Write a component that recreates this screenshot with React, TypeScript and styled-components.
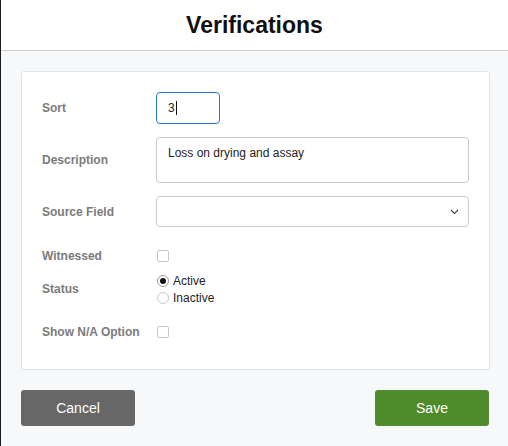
import React from "react";
import styled, { createGlobalStyle } from "styled-components";

const GlobalStyle = createGlobalStyle`
  * {
    box-sizing: border-box;
  }
  body {
    margin: 0;
    font-family: "Liberation Sans", Arial, sans-serif;
    background: #ffffff;
  }
`;

const Page = styled.div`
  display: flex;
  flex-direction: column;
  height: 446px;
  border-left: 1px solid #1c1c1c;
  background: #f7f8fa;
`;

const Header = styled.header`
  display: flex;
  align-items: center;
  justify-content: center;
  height: 51px;
  background: #ffffff;
  border-bottom: 1px solid #cfcfcf;
`;

const Title = styled.h1`
  margin: 0;
  font-size: 23px;
  font-weight: 700;
  color: #111111;
`;

const Body = styled.div`
  display: flex;
  flex-direction: column;
  padding: 20px 18px 0 20px;
`;

const Card = styled.div`
  display: flex;
  flex-direction: column;
  padding: 20px 20px 30px 20px;
  background: #ffffff;
  border: 1px solid #e2e3e5;
  border-radius: 3px;
`;

const Row = styled.div<{ $top?: number }>`
  display: grid;
  grid-template-columns: 114px 1fr;
  align-items: center;
  margin-top: ${({ $top }) => $top ?? 0}px;
`;

const Label = styled.label`
  font-size: 12px;
  font-weight: 700;
  color: #7b7b7b;
`;

const Field = styled.div<{ $focused?: boolean; $width?: number; $height: number }>`
  display: flex;
  align-items: center;
  width: ${({ $width }) => ($width ? `${$width}px` : "100%")};
  height: ${({ $height }) => $height}px;
  padding: 0 11px;
  font-size: 12px;
  color: #1e1e1e;
  background: #ffffff;
  border: 1px solid ${({ $focused }) => ($focused ? "#2a72d4" : "#cdcdcd")};
  border-radius: 4px;
`;

const TextArea = styled(Field)`
  align-items: flex-start;
  padding-top: 8px;
`;

const SelectBox = styled(Field)`
  justify-content: flex-end;
  padding: 0 9px;
`;

const Caret = styled.span`
  display: inline-block;
  width: 1px;
  height: 14px;
  margin-left: 1px;
  background: #111111;
`;

const Check = styled.span`
  display: block;
  width: 12px;
  height: 12px;
  margin-left: 1px;
  border: 1px solid #c9c9c9;
  border-radius: 2px;
  background: #ffffff;
`;

const RadioGroup = styled.div`
  display: flex;
  flex-direction: column;
`;

const RadioOption = styled.div`
  display: flex;
  align-items: center;
  gap: 4px;
  height: 17px;
  font-size: 12px;
  color: #1e1e1e;
`;

const RadioDot = styled.span<{ $checked?: boolean }>`
  display: flex;
  align-items: center;
  justify-content: center;
  width: 12px;
  height: 12px;
  margin-left: 1px;
  border-radius: 50%;
  border: 1px solid ${({ $checked }) => ($checked ? "#9a9a9a" : "#c9c9c9")};
  background: #ffffff;

  &::after {
    content: "";
    display: ${({ $checked }) => ($checked ? "block" : "none")};
    width: 6px;
    height: 6px;
    border-radius: 50%;
    background: #111111;
  }
`;

const Actions = styled.div`
  display: flex;
  justify-content: space-between;
  margin-top: 20px;
  padding-right: 1px;
`;

const Button = styled.button<{ $variant: "cancel" | "save" }>`
  width: 114px;
  height: 36px;
  font-family: inherit;
  font-size: 14px;
  color: #ffffff;
  border: none;
  border-radius: 3px;
  background: ${({ $variant }) => ($variant === "save" ? "#4f8a2b" : "#676767")};
  cursor: pointer;
`;

const Chevron = () => (
  <svg width="9" height="6" viewBox="0 0 9 6" fill="none">
    <path d="M1 1l3.5 3.5L8 1" stroke="#444" strokeWidth="1.1" />
  </svg>
);

export default function App() {
  return (
    <>
      <GlobalStyle />
      <Page>
        <Header>
          <Title>Verifications</Title>
        </Header>
        <Body>
          <Card>
            <Row>
              <Label>Sort</Label>
              <Field $focused $width={64} $height={32}>
                3<Caret />
              </Field>
            </Row>
            <Row $top={13}>
              <Label>Description</Label>
              <TextArea $height={46}>Loss on drying and assay</TextArea>
            </Row>
            <Row $top={13}>
              <Label>Source Field</Label>
              <SelectBox $height={31}>
                <Chevron />
              </SelectBox>
            </Row>
            <Row $top={22}>
              <Label>Witnessed</Label>
              <Check />
            </Row>
            <Row $top={9}>
              <Label>Status</Label>
              <RadioGroup>
                <RadioOption>
                  <RadioDot $checked />
                  Active
                </RadioOption>
                <RadioOption>
                  <RadioDot />
                  Inactive
                </RadioOption>
              </RadioGroup>
            </Row>
            <Row $top={19}>
              <Label>Show N/A Option</Label>
              <Check />
            </Row>
          </Card>
          <Actions>
            <Button $variant="cancel">Cancel</Button>
            <Button $variant="save">Save</Button>
          </Actions>
        </Body>
      </Page>
    </>
  );
}
